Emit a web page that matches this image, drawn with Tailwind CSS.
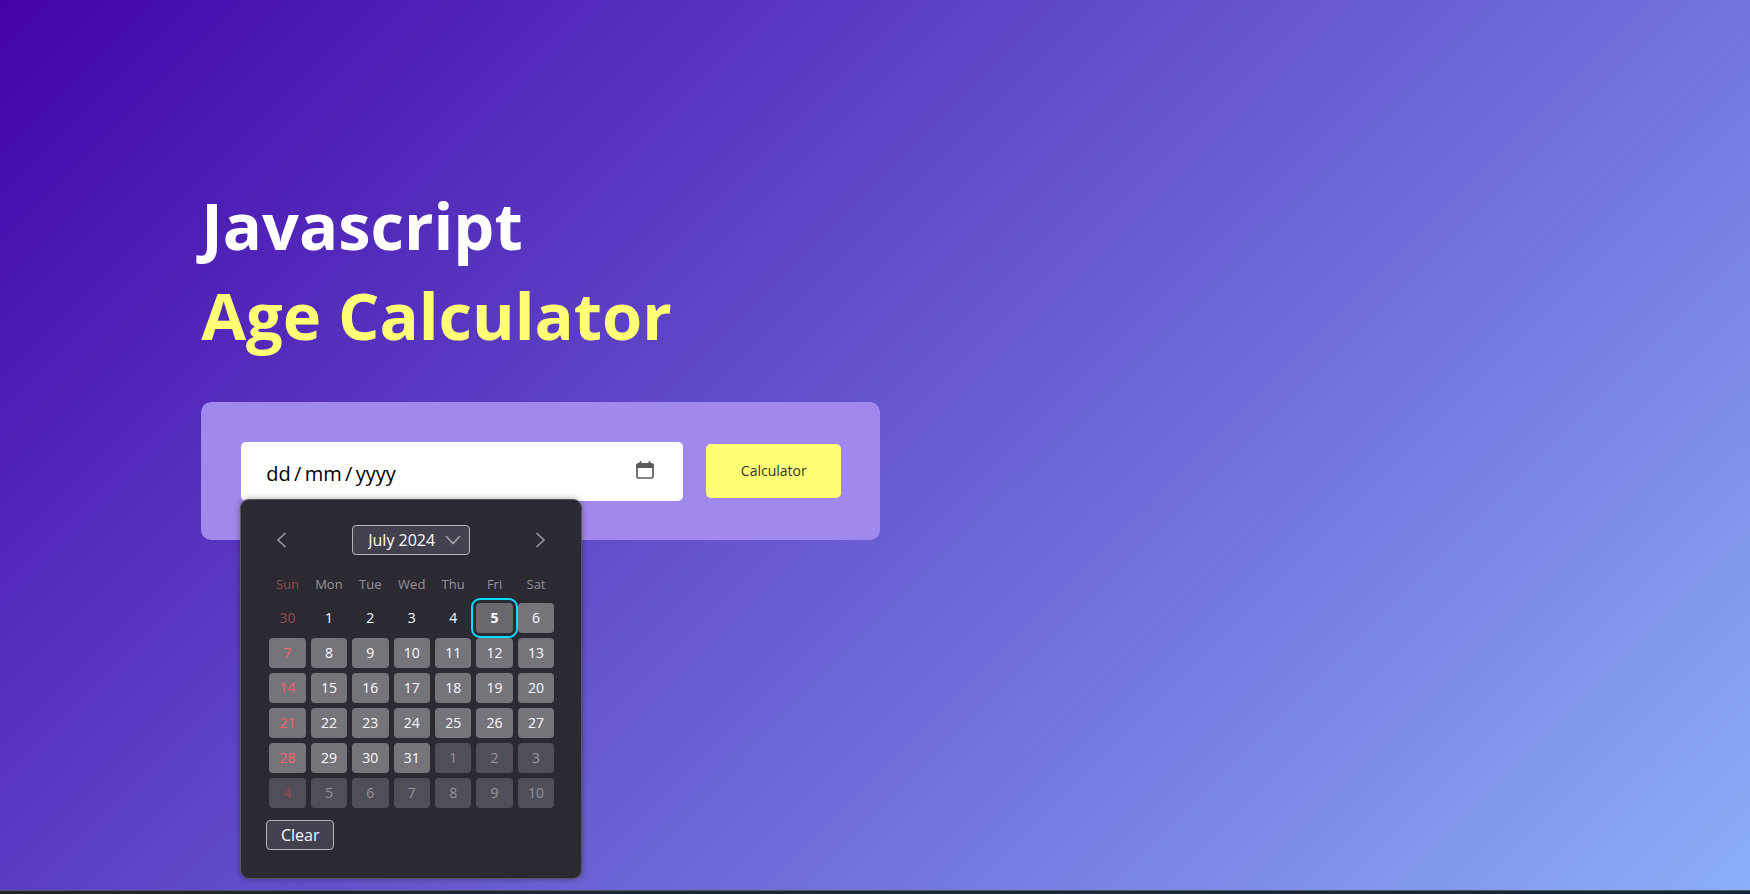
<!DOCTYPE html>
<html lang="en">
<head>
<meta charset="utf-8">
<meta name="viewport" content="width=device-width, initial-scale=1">
<title>Age Calculator</title>
<script src="https://cdn.jsdelivr.net/npm/@tailwindcss/browser@4"></script>
</head>
<body class="flex min-h-screen flex-col bg-[#1b2530] font-['Open_Sans','Noto_Sans',sans-serif]">
<main class="flex-1 bg-[linear-gradient(135deg,#4203a9,#90bafc_107%)] px-[11.5%] pt-[180px]">
  <h1 class="mb-[42px] text-[65px] leading-[90px] font-bold text-white">Javascript<br><span class="text-[#ffff76]">Age Calculator</span></h1>
  <form class="relative flex w-full max-w-[679px] items-start gap-[23px] rounded-[10px] bg-[#a088ec] pt-10 pr-[39px] pb-[39px] pl-10">
    <div class="relative flex-1">
      <input type="text" aria-label="Date of birth" placeholder="dd&#8198;/&#8198;mm&#8198;/&#8198;yyyy" class="block h-[59px] w-full rounded-[5px] bg-white pt-1 pr-16 pl-[25px] text-[20px] text-black outline-none placeholder:text-black">
      <button type="button" aria-label="Open calendar" class="absolute top-[19px] right-[29px]">
        <svg class="size-[18px]" viewBox="0 0 18 18" fill="none"><path d="M1 4.500V15.500a1.500 1.500 0 0 0 1.500 1.500h13a1.500 1.500 0 0 0 1.500-1.500V4.500" stroke="#5b5b5b" stroke-width="1.700"/><path d="M0 7V4.500A2.500 2.500 0 0 1 2.500 2H3.500V1a1 1 0 0 1 2 0v1h7V1a1 1 0 0 1 2 0v1h1A2.500 2.500 0 0 1 18 4.500V7Z" fill="#5b5b5b"/></svg>
      </button>
      <section aria-label="Choose a date" class="absolute top-[57px] -left-px z-10 w-[342px] rounded-[9px] border border-[#56555b] bg-[#2b2a33] px-6 pt-[25px] pb-7 text-[#fbfbfe] shadow-[0_0_6px_rgba(0,0,0,0.35)]">
        <div class="flex h-[30px] items-center justify-between px-[11px]">
          <button type="button" aria-label="Previous month"><svg class="h-4 w-[11px]" viewBox="0 0 11 16" fill="none" stroke="#98979c" stroke-width="1.600"><path d="M9.500 1 2 8l7.500 7"/></svg></button>
          <div class="relative">
            <select aria-label="Month" class="block h-[30px] w-[118px] appearance-none rounded-[4px] border border-[#b5b5b9] bg-[#42414d] pl-[15px] text-base leading-6 text-[#fbfbfe]"><option>July 2024</option></select>
            <svg class="pointer-events-none absolute top-[10px] right-[9px] h-[10px] w-4" viewBox="0 0 16 10" fill="none" stroke="#a3a2a8" stroke-width="1.600"><path d="m1 1 7 7.500L15 1"/></svg>
          </div>
          <button type="button" aria-label="Next month"><svg class="h-4 w-[11px]" viewBox="0 0 11 16" fill="none" stroke="#98979c" stroke-width="1.600"><path d="m1.500 1 7.500 7-7.500 7"/></svg></button>
        </div>
        <table class="mt-[10px] -ml-px w-[295px] table-fixed border-separate border-spacing-[5px] text-center text-[14px] leading-5">
          <thead class="text-[13px] text-[#939298]"><tr class="h-7"><th class="font-normal text-[#95474c]">Sun</th><th class="font-normal">Mon</th><th class="font-normal">Tue</th><th class="font-normal">Wed</th><th class="font-normal">Thu</th><th class="font-normal">Fri</th><th class="font-normal">Sat</th></tr></thead>
          <tbody id="days"></tbody>
        </table>
        <button type="button" class="mt-[7px] ml-px block h-[30px] w-[68px] rounded-[4px] border border-[#b5b5b9] bg-[#42414d] text-base leading-6">Clear</button>
      </section>
    </div>
    <button type="button" class="mt-0.5 h-[54px] w-[135px] rounded-[5px] bg-[#ffff76] text-sm text-[#333]">Calculator</button>
  </form>
</main>
<footer class="h-1 border-t border-[#55565c] bg-[linear-gradient(90deg,#1f2730,#12283a)]"></footer>
<script>
const body = document.getElementById('days');
for (let week = 0; week < 6; week++) {
  const row = body.insertRow();
  for (let day = 0; day < 7; day++) {
    const i = week * 7 + day;
    const date = i === 0 ? 30 : i > 31 ? i - 31 : i;
    const cell = row.insertCell();
    cell.className = 'p-0';
    const button = document.createElement('button');
    button.type = 'button';
    button.textContent = date;
    let look = 'bg-[#75747b] text-[#fbfbfe]';
    if (i === 0) look = 'text-[#95474c]';
    else if (i < 5) look = 'text-[#fbfbfe]';
    else if (i === 5) look = 'bg-[#69686f] font-bold text-[#fbfbfe] outline-2 outline-offset-[3px] outline-[#00ddff]';
    else if (i > 31) look = day === 0 ? 'bg-[#504f59] text-[#95474c]' : 'bg-[#504f59] text-[#96959b]';
    else if (day === 0) look = 'bg-[#75747b] text-[#fb6467]';
    button.className = 'block h-[30px] w-full rounded-[4px] ' + look;
    cell.append(button);
  }
}
</script>
</body>
</html>
